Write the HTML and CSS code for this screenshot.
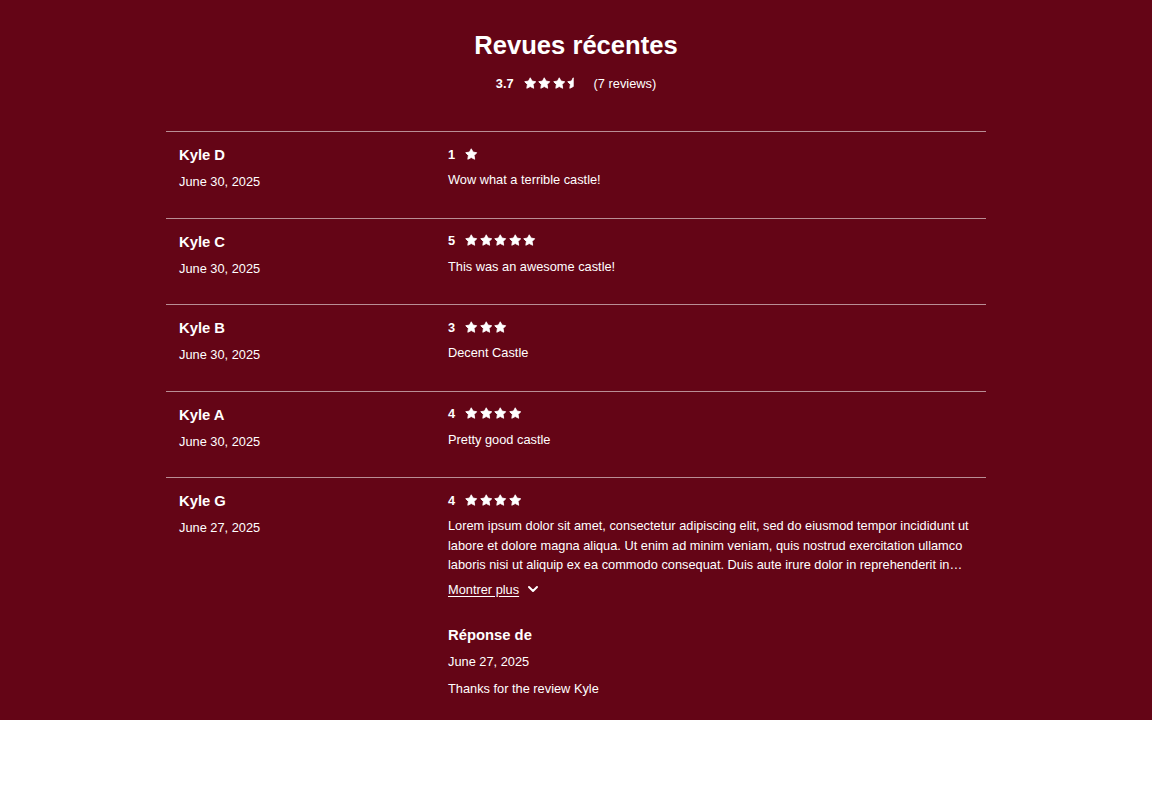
FILE: index.html
```html
<!DOCTYPE html>
<html lang="fr">
<head>
<meta charset="utf-8">
<title>Revues récentes</title>
<link rel="stylesheet" href="styles.css">
</head>
<body>
<svg width="0" height="0" class="defs" aria-hidden="true">
  <defs>
    <symbol id="star" viewBox="0 0 24 24">
      <path d="M12 1.5L15.4 7.8L22.6 9L17.5 14.3L18.6 21.6L12 18.3L5.4 21.6L6.5 14.3L1.4 9L8.6 7.8Z"/>
    </symbol>
    <symbol id="half" viewBox="0 0 24 24">
      <path d="M12 1.5L12 18.3L5.4 21.6L6.5 14.3L1.4 9L8.6 7.8Z"/>
    </symbol>
  </defs>
</svg>
<section class="reviews">
  <h1 class="title">Revues récentes</h1>
  <div class="summary">
    <span class="avg">3.7</span>
    <span class="stars">
      <svg class="star"><use href="#star"/></svg><svg class="star"><use href="#star"/></svg><svg class="star"><use href="#star"/></svg><svg class="star"><use href="#half"/></svg>
    </span>
    <span class="count">(7 reviews)</span>
  </div>

  <div class="list">
    <article class="review">
      <div class="meta">
        <div class="name">Kyle D</div>
        <div class="date">June 30, 2025</div>
      </div>
      <div class="body">
        <div class="rating"><span class="num">1</span><span class="stars"><svg class="star"><use href="#star"/></svg></span></div>
        <p class="text">Wow what a terrible castle!</p>
      </div>
    </article>

    <article class="review">
      <div class="meta">
        <div class="name">Kyle C</div>
        <div class="date">June 30, 2025</div>
      </div>
      <div class="body">
        <div class="rating"><span class="num">5</span><span class="stars"><svg class="star"><use href="#star"/></svg><svg class="star"><use href="#star"/></svg><svg class="star"><use href="#star"/></svg><svg class="star"><use href="#star"/></svg><svg class="star"><use href="#star"/></svg></span></div>
        <p class="text">This was an awesome castle!</p>
      </div>
    </article>

    <article class="review">
      <div class="meta">
        <div class="name">Kyle B</div>
        <div class="date">June 30, 2025</div>
      </div>
      <div class="body">
        <div class="rating"><span class="num">3</span><span class="stars"><svg class="star"><use href="#star"/></svg><svg class="star"><use href="#star"/></svg><svg class="star"><use href="#star"/></svg></span></div>
        <p class="text">Decent Castle</p>
      </div>
    </article>

    <article class="review">
      <div class="meta">
        <div class="name">Kyle A</div>
        <div class="date">June 30, 2025</div>
      </div>
      <div class="body">
        <div class="rating"><span class="num">4</span><span class="stars"><svg class="star"><use href="#star"/></svg><svg class="star"><use href="#star"/></svg><svg class="star"><use href="#star"/></svg><svg class="star"><use href="#star"/></svg></span></div>
        <p class="text">Pretty good castle</p>
      </div>
    </article>

    <article class="review last">
      <div class="meta">
        <div class="name">Kyle G</div>
        <div class="date">June 27, 2025</div>
      </div>
      <div class="body">
        <div class="rating"><span class="num">4</span><span class="stars"><svg class="star"><use href="#star"/></svg><svg class="star"><use href="#star"/></svg><svg class="star"><use href="#star"/></svg><svg class="star"><use href="#star"/></svg></span></div>
        <p class="text">Lorem ipsum dolor sit amet, consectetur adipiscing elit, sed do eiusmod tempor incididunt ut labore et dolore magna aliqua. Ut enim ad minim veniam, quis nostrud exercitation ullamco laboris nisi ut aliquip ex ea commodo consequat. Duis aute irure dolor in reprehenderit in…</p>
        <button class="more" type="button"><span class="more-label">Montrer plus</span>
          <svg class="chev" viewBox="0 0 12 12"><path d="M2 4l4 4 4-4"/></svg>
        </button>
        <div class="reply">
          <div class="name">Réponse de</div>
          <div class="date">June 27, 2025</div>
          <p class="text reply-text">Thanks for the review Kyle</p>
        </div>
      </div>
    </article>
  </div>
</section>
</body>
</html>
```

FILE: styles.css
```css
html, body {
  margin: 0;
  padding: 0;
  background: #ffffff;
}
body {
  font-family: "Liberation Sans", Arial, sans-serif;
  color: #ffffff;
}
.defs {
  position: absolute;
  width: 0;
  height: 0;
}
.reviews {
  background: #640516;
  padding: 30px 0 0;
}
.title {
  margin: 0;
  text-align: center;
  font-size: 25.6px;
  line-height: 30px;
  font-weight: 700;
}
.summary {
  margin-top: 15px;
  display: flex;
  justify-content: center;
  align-items: center;
  height: 16px;
  font-size: 12.8px;
}
.avg {
  font-weight: 700;
}
.summary .stars {
  margin-left: 10px;
}
.count {
  margin-left: 14px;
}
.stars {
  display: inline-flex;
  gap: 2px;
  align-items: center;
}
.star {
  width: 12.5px;
  height: 12.5px;
  fill: #ffffff;
  stroke: #ffffff;
  stroke-width: 1.6;
  stroke-linejoin: round;
  display: block;
}
.list {
  width: 820px;
  margin: 40px auto 0;
}
.review {
  display: grid;
  grid-template-columns: 269px 1fr;
  border-top: 1px solid rgba(255, 255, 255, 0.55);
  padding: 14px 13px 27.5px;
}
.review.last {
  padding-bottom: 21px;
}
.name {
  font-size: 14.8px;
  line-height: 18px;
  font-weight: 700;
}
.date {
  margin-top: 10px;
  font-size: 12.8px;
  line-height: 16px;
}
.rating {
  display: flex;
  align-items: center;
  height: 16px;
  font-size: 12.8px;
  font-weight: 700;
}
.rating .num {
  width: 17px;
}
.text {
  margin: 8px 0 0;
  font-size: 12.8px;
  line-height: 19.5px;
}
.more {
  margin-top: 5px;
  display: flex;
  align-items: center;
  gap: 8px;
  background: none;
  border: 0;
  padding: 0;
  color: #ffffff;
  font-family: inherit;
  font-size: 12.8px;
  line-height: 19.5px;
  cursor: pointer;
}
.more-label {
  text-decoration: underline;
  text-underline-offset: 2px;
}
.chev {
  width: 12px;
  height: 12px;
  fill: none;
  stroke: #ffffff;
  stroke-width: 2;
  stroke-linecap: round;
  stroke-linejoin: round;
}
.reply {
  margin-top: 27px;
}
.reply .date {
  margin-top: 10px;
}
.reply-text {
  margin-top: 9px;
}
```
